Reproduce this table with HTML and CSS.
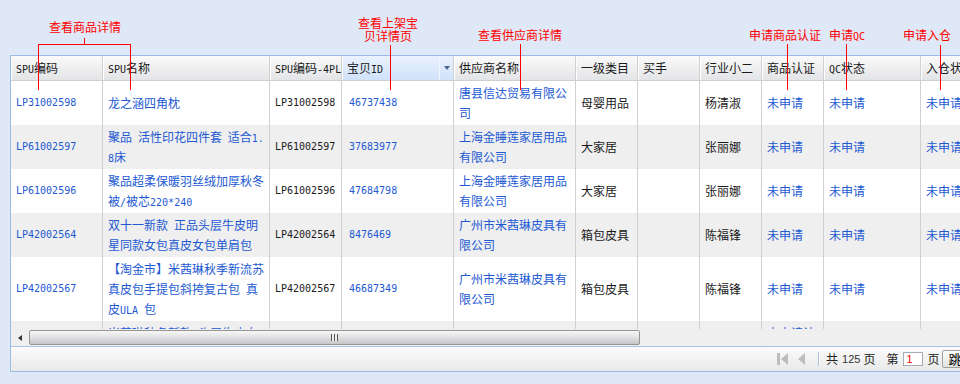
FILE: index.html
```html
<!DOCTYPE html>
<html lang="zh-CN">
<head>
<meta charset="utf-8">
<title>商品列表</title>
<link rel="stylesheet" href="styles.css">
</head>
<body>
<div class="page">
  <div class="panel">
    <div class="grid-view">
      <table class="grid">
        <colgroup>
          <col class="w92"><col class="w167"><col class="w72"><col class="w112"><col class="w122">
          <col class="w62"><col class="w62"><col class="w62"><col class="w62"><col class="w97"><col class="w100">
        </colgroup>
        <thead>
          <tr>
            <th><span class="en">SPU</span>编码</th>
            <th><span class="en">SPU</span>名称</th>
            <th><span class="en">SPU</span>编码<span class="en">-4PL</span></th>
            <th class="over"><span class="trigger"><span class="tri"></span></span>宝贝<span class="en">ID</span></th>
            <th>供应商名称</th>
            <th>一级类目</th>
            <th>买手</th>
            <th>行业小二</th>
            <th>商品认证</th>
            <th><span class="en">QC</span>状态</th>
            <th>入仓状态</th>
          </tr>
        </thead>
        <tbody>
          <tr>
            <td class="lnk en">LP31002598</td>
            <td class="lnk wrap">龙之涵四角枕</td>
            <td class="en">LP31002598</td>
            <td class="lnk en id">46737438</td>
            <td class="lnk wrap">唐县信达贸易有限公司</td>
            <td>母婴用品</td>
            <td></td>
            <td>杨清淑</td>
            <td class="lnk">未申请</td>
            <td class="lnk">未申请</td>
            <td class="lnk">未申请</td>
          </tr>
          <tr>
            <td class="lnk en">LP61002597</td>
            <td class="lnk wrap">聚品 活性印花四件套 适合<span class="en">1.8</span>床</td>
            <td class="en">LP61002597</td>
            <td class="lnk en id">37683977</td>
            <td class="lnk wrap">上海金睡莲家居用品有限公司</td>
            <td>大家居</td>
            <td></td>
            <td>张丽娜</td>
            <td class="lnk">未申请</td>
            <td class="lnk">未申请</td>
            <td class="lnk">未申请</td>
          </tr>
          <tr>
            <td class="lnk en">LP61002596</td>
            <td class="lnk wrap">聚品超柔保暖羽丝绒加厚秋冬被<span class="en">/</span>被芯<span class="en">220*240</span></td>
            <td class="en">LP61002596</td>
            <td class="lnk en id">47684798</td>
            <td class="lnk wrap">上海金睡莲家居用品有限公司</td>
            <td>大家居</td>
            <td></td>
            <td>张丽娜</td>
            <td class="lnk">未申请</td>
            <td class="lnk">未申请</td>
            <td class="lnk">未申请</td>
          </tr>
          <tr>
            <td class="lnk en">LP42002564</td>
            <td class="lnk wrap">双十一新款 正品头层牛皮明星同款女包真皮女包单肩包</td>
            <td class="en">LP42002564</td>
            <td class="lnk en id">8476469</td>
            <td class="lnk wrap">广州市米茜琳皮具有限公司</td>
            <td>箱包皮具</td>
            <td></td>
            <td>陈福锋</td>
            <td class="lnk">未申请</td>
            <td class="lnk">未申请</td>
            <td class="lnk">未申请</td>
          </tr>
          <tr>
            <td class="lnk en">LP42002567</td>
            <td class="lnk wrap">【淘金市】米茜琳秋季新流苏真皮包手提包斜挎复古包 真皮<span class="en">ULA</span> 包</td>
            <td class="en">LP42002567</td>
            <td class="lnk en id">46687349</td>
            <td class="lnk wrap">广州市米茜琳皮具有限公司</td>
            <td>箱包皮具</td>
            <td></td>
            <td>陈福锋</td>
            <td class="lnk">未申请</td>
            <td class="lnk">未申请</td>
            <td class="lnk">未申请</td>
          </tr>
          <tr>
            <td class="lnk en">LP42002568</td>
            <td class="lnk wrap">米茜琳秋冬新款 头层牛皮女包单肩斜挎包 真皮女包时尚百搭大容量手提包</td>
            <td class="en">LP42002568</td>
            <td class="lnk en id">46687350</td>
            <td class="lnk wrap">广州市米茜琳皮具有限公司</td>
            <td>箱包皮具</td>
            <td></td>
            <td>陈福锋</td>
            <td class="lnk wrap">未申请认证待审核中</td>
            <td class="lnk">未申请</td>
            <td class="lnk">未申请</td>
          </tr>
        </tbody>
      </table>
    </div>
    <div class="hscroll">
      <div class="sb-btn"><span class="sb-arrow"></span></div>
      <div class="sb-thumb"><span class="grip"></span></div>
    </div>
    <div class="footer">
      <svg class="pg-first" width="11" height="12" viewBox="0 0 11 12"><rect x="0" y="0" width="3" height="12" fill="#bdbdbd"/><polygon points="11,0 4,6 11,12" fill="#bdbdbd"/></svg>
      <svg class="pg-prev" width="8" height="12" viewBox="0 0 8 12"><polygon points="8,0 1,6 8,12" fill="#bdbdbd"/></svg>
      <span class="pg-sep"></span>
      <span class="pg-txt first-txt">共</span>
      <span class="pg-num">125</span>
      <span class="pg-txt">页</span>
      <span class="pg-txt gap">第</span>
      <span class="pg-input">1</span>
      <span class="pg-txt">页</span>
      <span class="pg-btn">跳转</span>
    </div>
  </div>

  <div class="notes">
    <div class="note n1">查看商品详情</div>
    <div class="hl b-top"></div>
    <div class="vl b-tick"></div>
    <div class="vl b-left"></div>
    <div class="vl b-right"></div>

    <div class="note n2">查看上架宝<br>贝详情页</div>
    <div class="vl l2"></div>

    <div class="note n3">查看供应商详情</div>
    <div class="vl l3"></div>

    <div class="note n4">申请商品认证</div>
    <div class="vl l4"></div>

    <div class="note n5">申请<span class="en">QC</span></div>
    <div class="vl l5"></div>

    <div class="note n6">申请入仓</div>
    <div class="vl l6"></div>
  </div>
</div>
</body>
</html>
```

FILE: styles.css
```css
* { box-sizing: border-box; }

html, body {
  margin: 0;
  padding: 0;
}

body {
  background: #dfe8f6;
  font-family: "Noto Sans CJK SC", sans-serif;
  font-size: 12px;
  line-height: 20px;
  color: #1a1a1a;
}

.page {
  position: relative;
  width: 960px;
  height: 384px;
  overflow: hidden;
  padding: 55px 0 0 10px;
}

.panel {
  width: 1012px;
  border: 1px solid #99bbe8;
  background: #fff;
}

.en {
  font-family: "DejaVu Sans Mono", monospace;
  font-size: 10px;
}

/* inline latin runs inside CJK text must not grow the line box */
.wrap .en,
th .en,
.note .en {
  line-height: 10px;
}

/* ---------- grid ---------- */
.grid-view {
  height: 273px;
  overflow: hidden;
}

.grid {
  table-layout: fixed;
  width: 1010px;
  border-spacing: 0;
  border-collapse: separate;
}

.w92 { width: 92px; }
.w167 { width: 167px; }
.w72 { width: 72px; }
.w112 { width: 112px; }
.w122 { width: 122px; }
.w62 { width: 62px; }
.w97 { width: 97px; }
.w100 { width: 100px; }

.grid th {
  font-weight: normal;
  text-align: left;
  padding: 0 4px 0 5px;
  line-height: 24px;
  height: 25px;
  white-space: nowrap;
  overflow: hidden;
  color: #1a1a1a;
  background: linear-gradient(#fafafa, #e3e4e6);
  border-right: 1px solid #d0d0d0;
  border-bottom: 1px solid #d0d0d0;
  box-shadow: inset 1px 0 0 #ffffff;
}

.grid th.over {
  padding-right: 0;
  background: linear-gradient(#eaf2fd, #cfe2fa);
}

.trigger {
  float: right;
  width: 14px;
  height: 24px;
  border-left: 1px solid #eef5fe;
  display: flex;
  align-items: center;
  justify-content: center;
}

.tri {
  width: 0;
  height: 0;
  border-left: 3.5px solid transparent;
  border-right: 3.5px solid transparent;
  border-top: 4px solid #4b6592;
}

.grid td {
  padding: 2px 4px 2px 5px;
  line-height: 20px;
  vertical-align: middle;
  border-right: 1px solid #d0d0d0;
  word-spacing: 3.2px;
  overflow: hidden;
}

.grid td.id { padding-left: 7px; }

.grid td.wrap { word-break: break-all; }

.grid td.en {
  font-family: "DejaVu Sans Mono", monospace;
  font-size: 10px;
}

.grid tbody tr:nth-child(even) td { background: #efefef; }

.lnk { color: #2259d3; }

/* ---------- horizontal scrollbar ---------- */
.hscroll {
  height: 17px;
  background: #efefef;
  display: flex;
  align-items: center;
}

.sb-btn {
  width: 18px;
  height: 17px;
  display: flex;
  align-items: center;
  justify-content: center;
}

.sb-arrow {
  width: 0;
  height: 0;
  border-top: 3px solid transparent;
  border-bottom: 3px solid transparent;
  border-right: 4px solid #333;
}

.sb-thumb {
  width: 611px;
  height: 15px;
  border: 1px solid #959595;
  border-radius: 2px;
  background: linear-gradient(#f7f7f7, #e3e3e5 45%, #c6c6c9);
  display: flex;
  align-items: center;
  justify-content: center;
}

.grip {
  width: 8px;
  height: 7px;
  background: linear-gradient(90deg, #555 0 1px, #eee 1px 3px, #555 3px 4px, #eee 4px 6px, #555 6px 7px, transparent 7px);
}

/* ---------- paging toolbar ---------- */
.footer {
  height: 25px;
  border-top: 1px solid #a9c3e6;
  background: linear-gradient(#fbfbfb, #e9e9e9);
  display: flex;
  align-items: center;
  padding-left: 766px;
  font-size: 12px;
  color: #222;
  white-space: nowrap;
}

.pg-prev { margin-left: 9px; }

.pg-sep {
  width: 2px;
  height: 14px;
  margin-left: 13px;
  border-left: 1px solid #a9bfdc;
  border-right: 1px solid #fff;
}

.pg-txt { line-height: 14px; }
.first-txt { margin-left: 6px; }

.pg-num {
  font-family: "Liberation Sans", sans-serif;
  font-size: 11px;
  margin: 0 3px 0 4px;
  color: #333;
}

.gap { margin-left: 11px; }

.pg-input {
  width: 20px;
  height: 14px;
  margin: 0 4px 0 5px;
  border: 1px solid #a5acb5;
  background: #fff;
  color: #f00;
  font-family: "Liberation Sans", sans-serif;
  font-size: 11px;
  line-height: 12px;
  padding-left: 2px;
}

.pg-btn {
  margin-left: 3px;
  width: 44px;
  height: 18px;
  border: 1px solid #a0a0a0;
  border-radius: 2px;
  background: linear-gradient(#ffffff, #e2e2e2);
  padding-left: 5px;
  line-height: 16px;
  font-size: 13px;
  color: #000;
}

/* ---------- red annotations ---------- */
.notes {
  position: absolute;
  inset: 0;
  pointer-events: none;
}

.note {
  position: absolute;
  color: #f00;
  font-size: 12px;
  line-height: 14px;
  white-space: nowrap;
}

.note .en { font-size: 10px; }

.n1 { left: 49px; top: 20px; }
.n2 { left: 358px; top: 16px; width: 60px; text-align: center; line-height: 13px; }
.n3 { left: 478px; top: 28px; }
.n4 { left: 749px; top: 28px; }
.n5 { left: 829px; top: 28px; }
.n6 { left: 903px; top: 28px; }

.vl { position: absolute; width: 1px; background: #f00; }
.hl { position: absolute; height: 1px; background: #f00; }

.b-top { left: 38px; top: 44px; width: 93px; }
.b-tick { left: 84px; top: 38px; height: 6px; }
.b-left { left: 38px; top: 44px; height: 46px; }
.b-right { left: 130px; top: 44px; height: 46px; }
.l2 { left: 390px; top: 45px; height: 45px; }
.l3 { left: 520px; top: 44px; height: 46px; }
.l4 { left: 787px; top: 44px; height: 46px; }
.l5 { left: 846px; top: 44px; height: 46px; }
.l6 { left: 940px; top: 45px; height: 45px; }
```
